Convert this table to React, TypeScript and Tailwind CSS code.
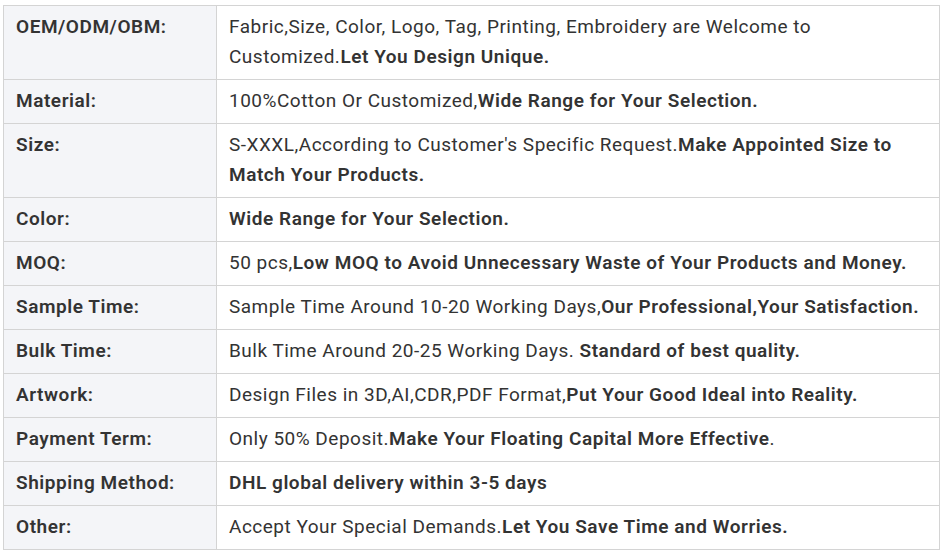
const rows: { label: string; text: string; bold: string; tail?: string }[] = [
  { label: 'OEM/ODM/OBM:', text: 'Fabric,Size, Color, Logo, Tag, Printing, Embroidery are Welcome to Customized.', bold: 'Let You Design Unique.' },
  { label: 'Material:', text: '100%Cotton Or Customized,', bold: 'Wide Range for Your Selection.' },
  { label: 'Size:', text: "S-XXXL,According to Customer's Specific Request.", bold: 'Make Appointed Size to Match Your Products.' },
  { label: 'Color:', text: '', bold: 'Wide Range for Your Selection.' },
  { label: 'MOQ:', text: '50 pcs,', bold: 'Low MOQ to Avoid Unnecessary Waste of Your Products and Money.' },
  { label: 'Sample Time:', text: 'Sample Time Around 10-20 Working Days,', bold: 'Our Professional,Your Satisfaction.' },
  { label: 'Bulk Time:', text: 'Bulk Time Around 20-25 Working Days. ', bold: 'Standard of best quality.' },
  { label: 'Artwork:', text: 'Design Files in 3D,AI,CDR,PDF Format,', bold: 'Put Your Good Ideal into Reality.' },
  { label: 'Payment Term:', text: 'Only 50% Deposit.', bold: 'Make Your Floating Capital More Effective', tail: '.' },
  { label: 'Shipping Method:', text: '', bold: 'DHL global delivery within 3-5 days' },
  { label: 'Other:', text: 'Accept Your Special Demands.', bold: 'Let You Save Time and Worries.' },
]

export default function App() {
  return (
    <div className="min-h-screen bg-white pl-[3px] pt-[5px] font-['Roboto',sans-serif] text-[#333]">
      <table className="w-[937px] border-collapse text-[19px] leading-[30px] tracking-[0.5px]">
        <tbody>
          {rows.map((r) => (
            <tr key={r.label}>
              <td className="w-[213px] border border-[#d4d4d4] bg-[#f4f5f8] pl-[12px] pr-2 pt-[6px] pb-[7px] align-top font-semibold tracking-[0.55px]">
                {r.label}
              </td>
              <td className="border border-[#d4d4d4] bg-white pl-[12px] pr-2 pt-[6px] pb-[7px] align-top">
                {r.text}
                <span className="font-semibold tracking-[0.55px]">{r.bold}</span>
                {r.tail}
              </td>
            </tr>
          ))}
        </tbody>
      </table>
    </div>
  )
}
